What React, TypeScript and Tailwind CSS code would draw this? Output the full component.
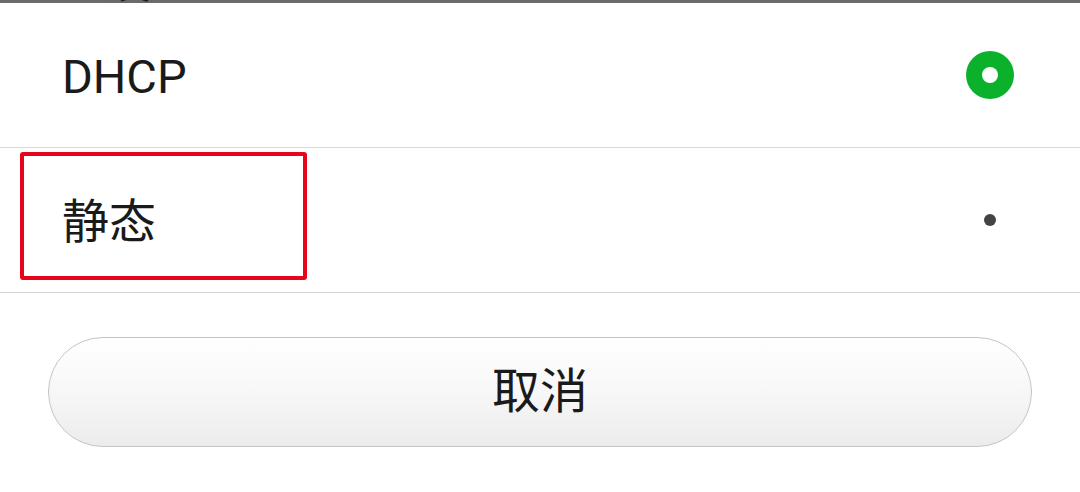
import React from "react";

export default function App() {
  const font = { fontFamily: 'Roboto, "Noto Sans CJK SC", sans-serif' };
  return (
    <div className="w-[1080px] h-[492px] bg-white flex flex-col overflow-hidden text-[#1a1a1a]" style={font}>
      <div className="relative h-[3px] bg-[#6b6b6b] overflow-hidden shrink-0">
        <span className="absolute left-[48px] bottom-[-2px] text-[48px] leading-none text-[#1a1a1a] whitespace-nowrap">IP 设置</span>
      </div>
      <div className="h-[145px] flex items-center justify-between pl-[62px] pr-[66px] border-b border-[#d9d9d9] shrink-0">
        <span className="text-[47px] leading-none mt-[2px]">DHCP</span>
        <span className="w-[48px] h-[48px] rounded-full bg-[#0bb02b] flex items-center justify-center">
          <span className="w-[16px] h-[16px] rounded-full bg-white" />
        </span>
      </div>
      <div className="h-[145px] flex items-center justify-between pl-[20px] pr-[84px] border-b border-[#d6d6d6] shrink-0">
        <div className="w-[287px] h-[128px] border-[4px] border-[#e8051c] rounded-[3px] flex items-center pl-[38px] mt-[-8px]">
          <span className="text-[47px] leading-none mt-[10px]">静态</span>
        </div>
        <span className="w-[12px] h-[12px] rounded-full bg-[#444444]" />
      </div>
      <div className="flex-1 px-[48px] pt-[44px]">
        <div className="h-[110px] rounded-full border border-[#c4c4c4] bg-gradient-to-b from-white via-[#f7f7f7] to-[#ececec] flex items-center justify-center">
          <span className="text-[48px] leading-none">取消</span>
        </div>
      </div>
    </div>
  );
}
